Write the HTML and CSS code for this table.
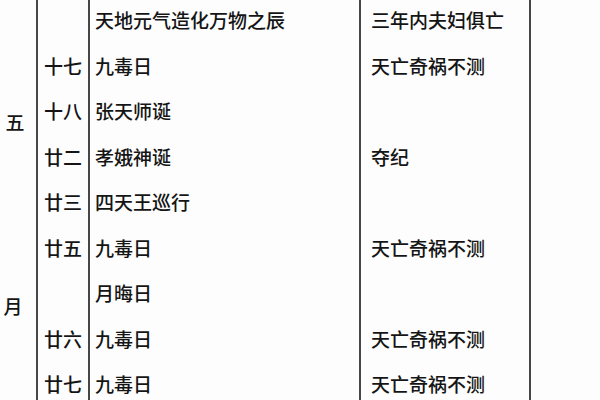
FILE: index.html
```html
<!DOCTYPE html>
<html lang="zh">
<head>
<meta charset="utf-8">
<link rel="stylesheet" href="styles.css">
</head>
<body>
<div class="sheet">
  <div class="month">
    <span class="m m-top">五</span>
    <span class="m m-bottom">月</span>
  </div>
  <div class="table">
    <div class="day"></div><div class="desc">天地元气造化万物之辰</div><div class="effect">三年内夫妇俱亡</div>
    <div class="day">十七</div><div class="desc">九毒日</div><div class="effect">天亡奇祸不测</div>
    <div class="day">十八</div><div class="desc">张天师诞</div><div class="effect"></div>
    <div class="day">廿二</div><div class="desc">孝娥神诞</div><div class="effect">夺纪</div>
    <div class="day">廿三</div><div class="desc">四天王巡行</div><div class="effect"></div>
    <div class="day">廿五</div><div class="desc">九毒日</div><div class="effect">天亡奇祸不测</div>
    <div class="day"></div><div class="desc">月晦日</div><div class="effect"></div>
    <div class="day">廿六</div><div class="desc">九毒日</div><div class="effect">天亡奇祸不测</div>
    <div class="day">廿七</div><div class="desc">九毒日</div><div class="effect">天亡奇祸不测</div>
  </div>
</div>
</body>
</html>
```
FILE: styles.css
```css
html, body {
  margin: 0;
  padding: 0;
  background: #fdfdfd;
  width: 600px;
  height: 400px;
  overflow: hidden;
}
body {
  font-family: "Noto Sans CJK SC", "Noto Sans", sans-serif;
  font-size: 19px;
  font-weight: 500;
  color: #151515;
}
.sheet {
  display: flex;
  margin-top: -3px;
}
.month {
  width: 36px;
  display: flex;
  flex-direction: column;
  align-items: center;
  padding-right: 6px;
  box-sizing: border-box;
  padding-top: 115px;
}
.m {
  display: block;
  line-height: 19px;
  height: 19px;
}
.m-bottom {
  margin-top: 165px;
  margin-left: -4px;
}
.table {
  display: grid;
  grid-template-columns: 50px 271px 170px;
  grid-auto-rows: 45.5px;
  border-left: 2px solid #474747;
  border-right: 2px solid #474747;
}
.day, .desc, .effect {
  display: flex;
  align-items: center;
  line-height: 1;
}
.day {
  justify-content: center;
}
.desc {
  border-left: 2px solid #474747;
  padding-left: 5px;
}
.effect {
  border-left: 2px solid #474747;
  padding-left: 10px;
}
```
